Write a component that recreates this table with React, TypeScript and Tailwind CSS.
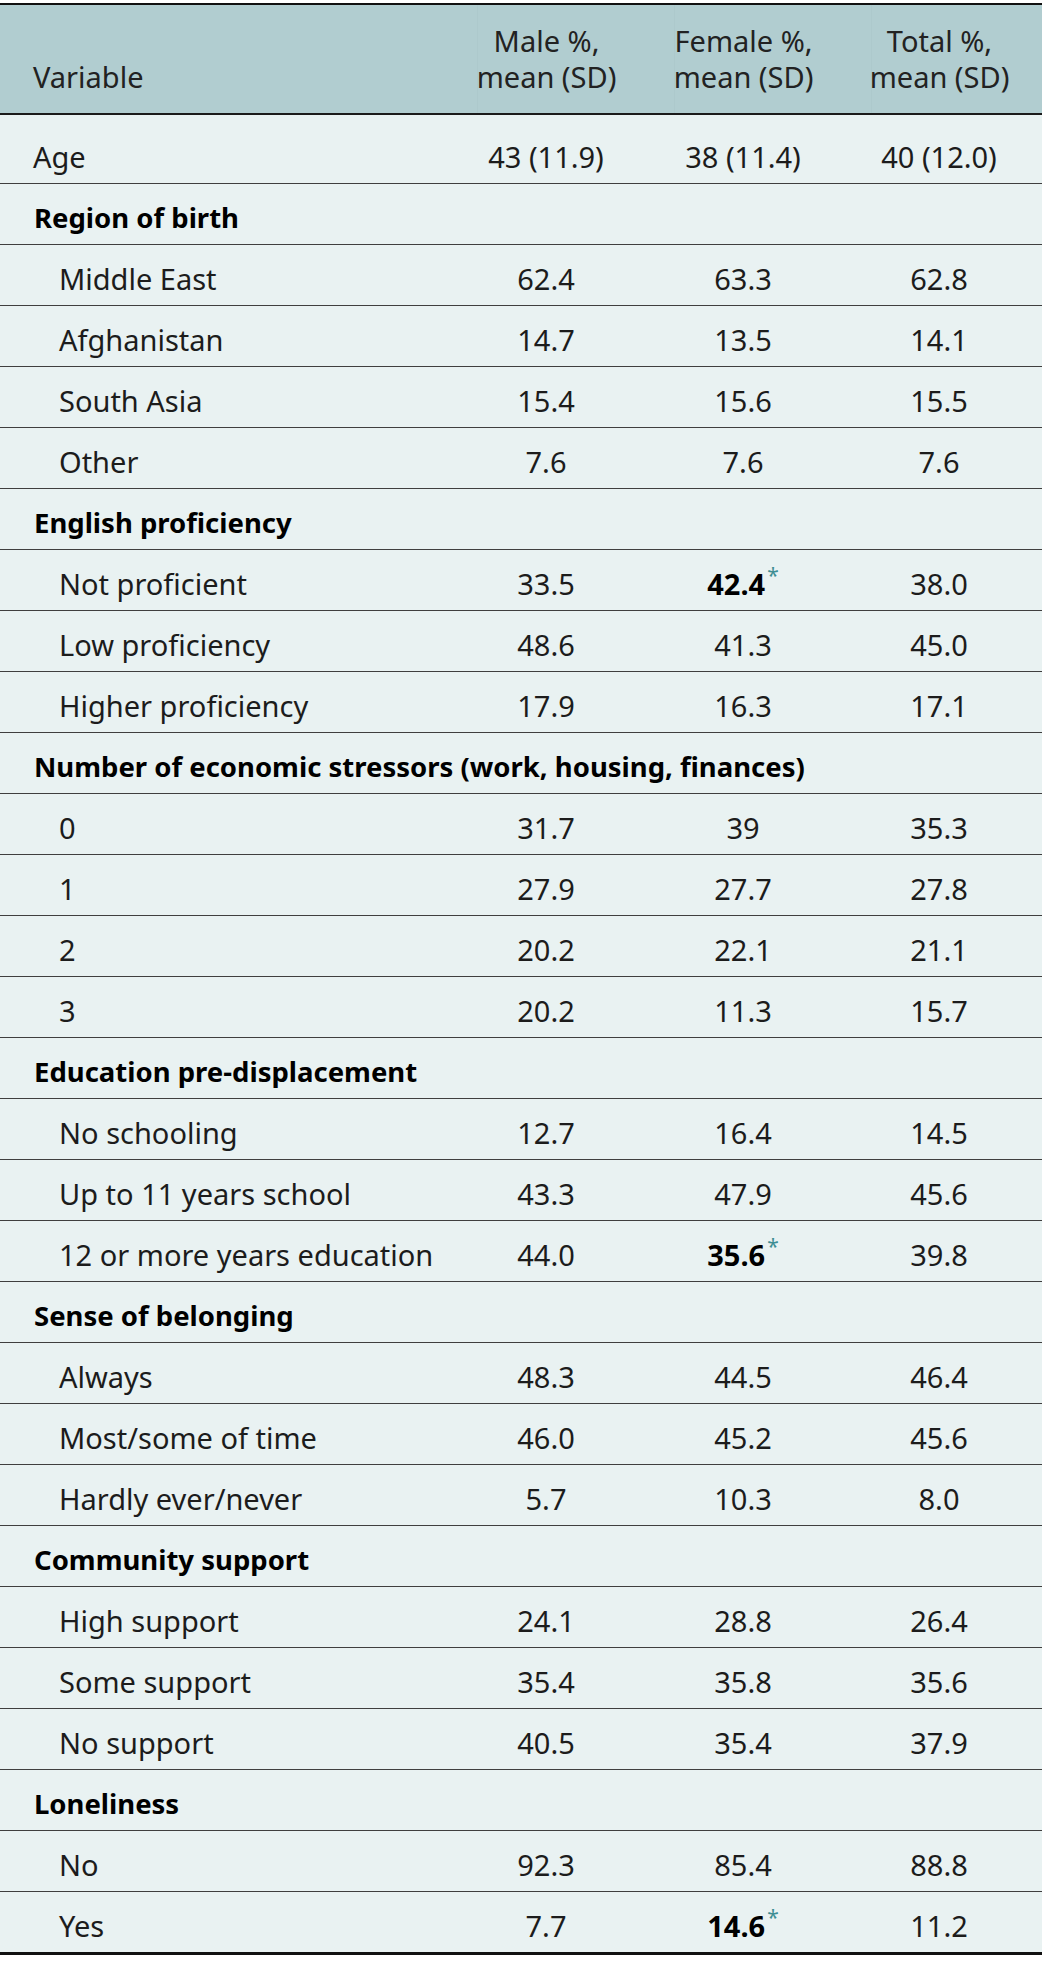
type Row = {
  label: string;
  kind: "plain" | "group" | "item";
  m?: string;
  f?: string;
  t?: string;
  star?: boolean;
};

const rows: Row[] = [
  { label: "Age", kind: "plain", m: "43 (11.9)", f: "38 (11.4)", t: "40 (12.0)" },
  { label: "Region of birth", kind: "group" },
  { label: "Middle East", kind: "item", m: "62.4", f: "63.3", t: "62.8" },
  { label: "Afghanistan", kind: "item", m: "14.7", f: "13.5", t: "14.1" },
  { label: "South Asia", kind: "item", m: "15.4", f: "15.6", t: "15.5" },
  { label: "Other", kind: "item", m: "7.6", f: "7.6", t: "7.6" },
  { label: "English proficiency", kind: "group" },
  { label: "Not proficient", kind: "item", m: "33.5", f: "42.4", t: "38.0", star: true },
  { label: "Low proficiency", kind: "item", m: "48.6", f: "41.3", t: "45.0" },
  { label: "Higher proficiency", kind: "item", m: "17.9", f: "16.3", t: "17.1" },
  { label: "Number of economic stressors (work, housing, finances)", kind: "group" },
  { label: "0", kind: "item", m: "31.7", f: "39", t: "35.3" },
  { label: "1", kind: "item", m: "27.9", f: "27.7", t: "27.8" },
  { label: "2", kind: "item", m: "20.2", f: "22.1", t: "21.1" },
  { label: "3", kind: "item", m: "20.2", f: "11.3", t: "15.7" },
  { label: "Education pre-displacement", kind: "group" },
  { label: "No schooling", kind: "item", m: "12.7", f: "16.4", t: "14.5" },
  { label: "Up to 11 years school", kind: "item", m: "43.3", f: "47.9", t: "45.6" },
  { label: "12 or more years education", kind: "item", m: "44.0", f: "35.6", t: "39.8", star: true },
  { label: "Sense of belonging", kind: "group" },
  { label: "Always", kind: "item", m: "48.3", f: "44.5", t: "46.4" },
  { label: "Most/some of time", kind: "item", m: "46.0", f: "45.2", t: "45.6" },
  { label: "Hardly ever/never", kind: "item", m: "5.7", f: "10.3", t: "8.0" },
  { label: "Community support", kind: "group" },
  { label: "High support", kind: "item", m: "24.1", f: "28.8", t: "26.4" },
  { label: "Some support", kind: "item", m: "35.4", f: "35.8", t: "35.6" },
  { label: "No support", kind: "item", m: "40.5", f: "35.4", t: "37.9" },
  { label: "Loneliness", kind: "group" },
  { label: "No", kind: "item", m: "92.3", f: "85.4", t: "88.8" },
  { label: "Yes", kind: "item", m: "7.7", f: "14.6", t: "11.2", star: true },
];

const grid = "grid grid-cols-[477px_197px_197px_171px]";

function Star() {
  return <sup className="top-[-0.55em] ml-[2px] text-[21px] font-normal text-[#3f8e94]">*</sup>;
}

function HeadCell({ top, pr }: { top: string; pr: string }) {
  return (
    <div className={`flex h-[108px] items-end justify-center border-l border-[#adc9cc] pb-[18px] ${pr}`}>
      <div className="whitespace-nowrap text-center">
        {top}
        <br />
        mean (SD)
      </div>
    </div>
  );
}

export default function App() {
  return (
    <div className="min-h-[1964px] w-[1042px] bg-white pt-[3px] font-['Noto_Sans','Open_Sans',sans-serif] text-[29px] text-[#1c1c1c]">
      <div className="border-t-[2px] border-b-[3px] border-[#111] bg-[#e9f2f2]">
        {/* Header */}
        <div className={`${grid} border-b-[2px] border-[#1a1a1a] bg-[#b1cdd0] text-[#222] leading-[36px]`}>
          <div className="flex h-[108px] items-end pb-[18px] pl-[33px]">Variable</div>
          <HeadCell top="Male %," pr="pr-[59px]" />
          <HeadCell top="Female %," pr="pr-[59px]" />
          <HeadCell top="Total %," pr="pr-[35px]" />
        </div>

        {/* Body */}
        {rows.map((r, i) => {
          const last = i === rows.length - 1;
          const height = i === 0 ? "h-[68px] pt-[15px]" : "h-[60px] pt-[8px]";
          return (
            <div
              key={r.label + i}
              className={`${grid} ${last ? "" : "border-b border-[#3f3f3f]"} leading-[36px]`}
            >
              <div
                className={`flex items-center ${height} ${
                  r.kind === "group"
                    ? "col-span-4 whitespace-nowrap pl-[34px] text-[27.5px] font-bold text-black"
                    : r.kind === "item"
                      ? "pl-[59px]"
                      : "pl-[33px]"
                }`}
              >
                {r.label}
              </div>
              {r.kind !== "group" && (
                <>
                  <div className={`flex items-center justify-center ${height} pr-[59px]`}>{r.m}</div>
                  <div className={`flex items-center justify-center ${height} pr-[59px]`}>
                    {r.star ? (
                      <span className="font-bold text-black">
                        {r.f}
                        <Star />
                      </span>
                    ) : (
                      r.f
                    )}
                  </div>
                  <div className={`flex items-center justify-center ${height} pr-[35px]`}>{r.t}</div>
                </>
              )}
            </div>
          );
        })}
      </div>
    </div>
  );
}
